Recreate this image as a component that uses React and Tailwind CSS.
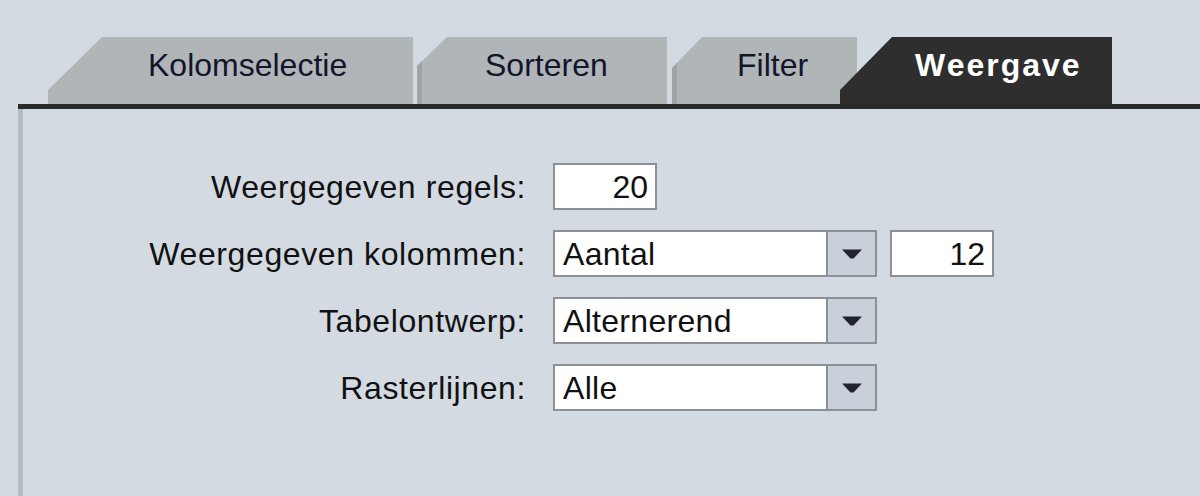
import { useState } from 'react';

const tabs = [
    { label: 'Kolomselectie', w: 'w-[365px]', pl: 'pl-[100px]', shape: '[clip-path:polygon(0_53px,54px_0,100%_0,100%_100%,0_100%)]', strip: false },
    { label: 'Sorteren', w: 'w-[250px] ml-[4px]', pl: 'pl-[63px]', shape: '[clip-path:polygon(0_29px,30px_0,100%_0,100%_100%,0_100%)]', strip: true },
    { label: 'Filter', w: 'w-[185px] ml-[5px]', pl: 'pl-[60px]', shape: '[clip-path:polygon(0_31px,30px_0,100%_0,100%_100%,0_100%)]', strip: true },
];

const DropArrow = () => (
    <svg width="22" height="10" viewBox="0 0 22 10">
        <path d="M1 0.5 H21 L12.5 9.5 H9.5 Z" fill="#232330" />
    </svg>
);

const Select = ({ value }) => (
    <div className="flex h-[47px] w-[324px] border-2 border-[#8b9196] bg-white">
        <div className="flex flex-1 items-center pl-[8px] text-[32px] leading-none tracking-[0.3px] text-[#111]">{value}</div>
        <div className="flex w-[49px] items-center justify-center border-l-2 border-[#8b9196] bg-[#c9d0d9]">
            <DropArrow />
        </div>
    </div>
);

const NumberBox = ({ value, className = '' }) => (
    <div className={`flex h-[47px] w-[104px] items-center justify-end border-2 border-[#8b9196] bg-white pr-[7px] text-[32px] leading-none text-[#111] ${className}`}>
        {value}
    </div>
);

const Row = ({ label, children }) => (
    <>
        <div className="flex items-center justify-end text-[32px] leading-none tracking-[0.6px] text-[#111]">{label}</div>
        <div className="flex items-center gap-[13px]">{children}</div>
    </>
);

export default function App() {
    const [active] = useState('Weergave');

    return (
        <div className="flex h-[496px] w-[1200px] flex-col overflow-hidden bg-[#d3dae2] pt-[37px] font-['Liberation_Sans',Arial,sans-serif]">
            {/* tab strip */}
            <div className="flex h-[67px] pl-[48px]">
                {tabs.map((t) => (
                    <div
                        key={t.label}
                        className={`flex h-full ${t.w} ${t.pl} ${t.shape} ${t.strip ? 'border-l-[5px] border-[#9da4a8]' : ''} bg-[#b0b6b8] pt-[12px] text-[32px] leading-none text-[#14142a]`}
                    >
                        {t.label}
                    </div>
                ))}
                <div className="relative z-10 -ml-[17px] flex h-full w-[272px] bg-[#2e2e2e] pl-[75px] pt-[12px] text-[32px] font-bold leading-none tracking-[2px] text-white [clip-path:polygon(0_53px,52px_0,100%_0,100%_100%,0_100%)]">
                    {active}
                </div>
            </div>

            {/* dark rule under tabs */}
            <div className="ml-[18px] h-[5px] bg-[#2a2a2a]" />

            {/* panel */}
            <div className="ml-[18px] flex-1 border-l-[5px] border-[#b4bbc1] pt-[54px]">
                <div className="grid grid-cols-[503px_auto] gap-x-[27px] gap-y-[20px]">
                    <Row label="Weergegeven regels:">
                        <NumberBox value="20" />
                    </Row>
                    <Row label="Weergegeven kolommen:">
                        <Select value="Aantal" />
                        <NumberBox value="12" />
                    </Row>
                    <Row label="Tabelontwerp:">
                        <Select value="Alternerend" />
                    </Row>
                    <Row label="Rasterlijnen:">
                        <Select value="Alle" />
                    </Row>
                </div>
            </div>
        </div>
    );
}
